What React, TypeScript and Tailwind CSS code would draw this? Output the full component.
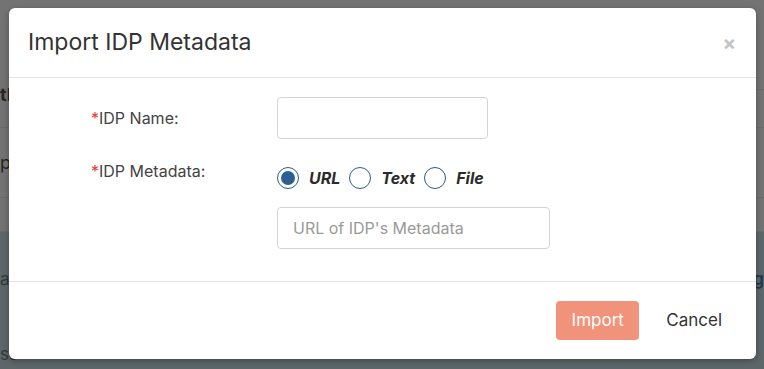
import React from "react";

function Radio({ checked, label }: { checked?: boolean; label: string }) {
  return (
    <label className="mr-[9px] flex items-center gap-[10px]">
      <span className="flex h-[22px] w-[22px] items-center justify-center rounded-full border-[1.5px] border-[#2c5d8c] bg-white">
        {checked && <span className="h-[14px] w-[14px] rounded-full bg-[#2c5f93]" />}
      </span>
      <span className="text-[16px] font-bold italic text-[#2b2b2b]">{label}</span>
    </label>
  );
}

export default function App() {
  return (
    <div className="relative h-[369px] w-[764px] overflow-hidden bg-[#737373]" style={{ fontFamily: "Inter, 'Noto Sans', sans-serif" }}>
      {/* page behind the dimmed backdrop */}
      <div className="flex flex-col text-[#262626]">
        <div className="h-[90px] border-b border-[#6a6a6a]" />
        <div className="flex h-[38px] items-start border-b border-[#6a6a6a]">
          <span className="mt-[-9px] text-[18px] font-bold">tl</span>
        </div>
        <div className="flex h-[70px] items-center border-b border-[#6a6a6a]">
          <span className="text-[18px]">pe</span>
        </div>
        <div className="h-[34px] border-b border-[#6a6a6a]" />
        <div className="flex h-[137px] flex-col bg-[#5d6669]">
          <div className="flex h-[60px] items-end justify-between">
            <span className="text-[17px] text-[#2f3a3e]">ar</span>
            <span className="text-[17px] font-semibold text-[#1e3a4a]">eg</span>
          </div>
          <div className="mt-[50px]">
            <span className="text-[17px] text-[#2f3a3e]">ss</span>
          </div>
        </div>
      </div>

      {/* modal */}
      <div className="absolute left-[9px] top-[8px] flex h-[351px] w-[747px] flex-col rounded-[6px] bg-white shadow-[0_2px_6px_rgba(0,0,0,0.3)]">
        <div className="flex h-[70px] items-center justify-between border-b border-[#e5e5e5] pl-[19px] pr-[20px]">
          <h2 className="text-[23px] font-normal text-[#333]">Import IDP Metadata</h2>
          <span className="text-[20px] font-bold leading-none text-[#c4c4c4]">×</span>
        </div>
        <div className="flex flex-col gap-[22px] border-b border-[#e5e5e5] pb-[32px] pt-[19px]">
          <div className="flex items-center">
            <div className="w-[268px] pl-[82px] text-[16px] text-[#444]">
              <span className="text-[#e53935]">*</span>IDP Name:
            </div>
            <input className="h-[42px] w-[211px] rounded-[4px] border border-[#d4d4d4] px-[14px] text-[16px] outline-none" />
          </div>
          <div className="flex items-start">
            <div className="w-[268px] pl-[82px] text-[16px] leading-[20px] text-[#444]">
              <span className="text-[#e53935]">*</span>IDP Metadata:
            </div>
            <div className="flex flex-col gap-[17px] pt-[5px]">
              <div className="flex items-center">
                <Radio checked label="URL" />
                <Radio label="Text" />
                <Radio label="File" />
              </div>
              <input
                placeholder="URL of IDP's Metadata"
                className="h-[42px] w-[273px] rounded-[4px] border border-[#d4d4d4] px-[15px] text-[16px] outline-none placeholder:text-[#9a9a9a]"
              />
            </div>
          </div>
        </div>
        <div className="flex flex-1 items-center justify-end gap-[13px] pr-[20px]">
          <button className="h-[39px] w-[83px] rounded-[4px] bg-[#f0937a] text-[17px] text-white">Import</button>
          <button className="h-[39px] px-[14px] text-[17px] text-[#333]">Cancel</button>
        </div>
      </div>
    </div>
  );
}
